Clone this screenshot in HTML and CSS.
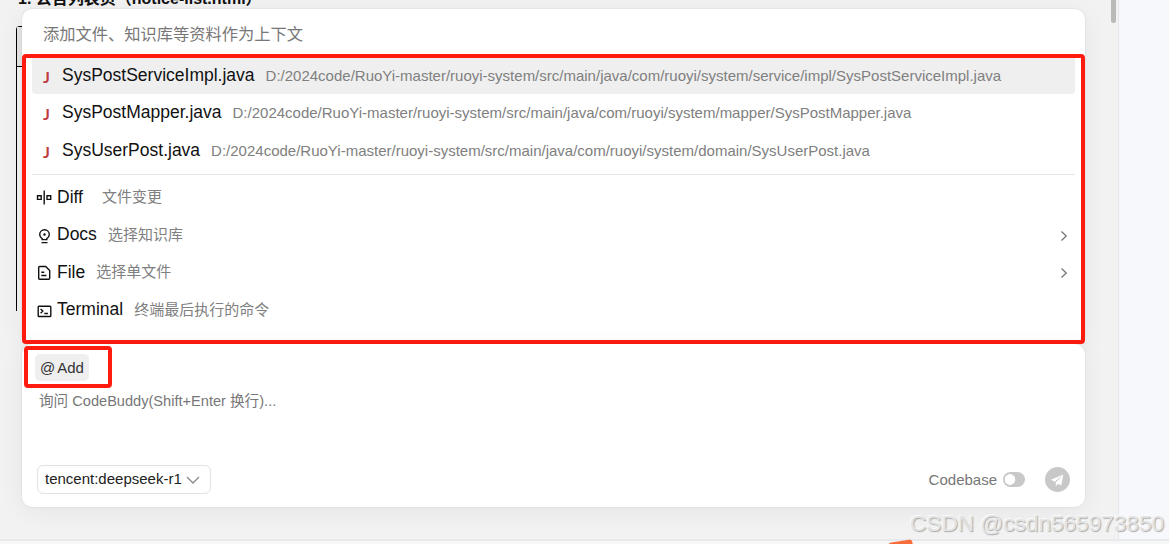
FILE: index.html
```html
<!DOCTYPE html>
<html lang="zh-CN">
  <head>
    <meta charset="utf-8">
    <meta name="viewport" content="width=device-width, initial-scale=1">
    <title>CodeBuddy</title>
    <link rel="stylesheet" href="styles.css">
  </head>
<body>
  <div class="layout">
    <div class="chat">
      <!-- answer behind the popup -->
      <div class="answer-title">1. 公告列表页（notice-list.html）</div>
      <div class="answer-code"><div class="code-head"></div></div>
      <div class="scroll-thumb"></div>

      <div class="menu">
        <div class="menu-search">添加文件、知识库等资料作为上下文</div>
        <div class="menu-list">
          <div class="file active"><span class="java">J</span><span class="name">SysPostServiceImpl.java</span><span class="path">D:/2024code/RuoYi-master/ruoyi-system/src/main/java/com/ruoyi/system/service/impl/SysPostServiceImpl.java</span></div>
          <div class="file"><span class="java">J</span><span class="name">SysPostMapper.java</span><span class="path">D:/2024code/RuoYi-master/ruoyi-system/src/main/java/com/ruoyi/system/mapper/SysPostMapper.java</span></div>
          <div class="file"><span class="java">J</span><span class="name">SysUserPost.java</span><span class="path">D:/2024code/RuoYi-master/ruoyi-system/src/main/java/com/ruoyi/system/domain/SysUserPost.java</span></div>
          <div class="divider"></div>
          <div class="option">
            <svg class="icon" viewBox="0 0 16 16"><path d="M1.500 5.700h3.700v3.700H1.500zM11 5.700h3.700v3.700H11zM8.200.5v14"/></svg>
            <span class="name">Diff</span><span class="desc wide">文件变更</span>
          </div>
          <div class="option">
            <svg class="icon" viewBox="0 0 16 16"><path d="M6.200 11.600v-1C4.700 9.800 3.700 8.500 3.700 6.600a4.800 4.800 0 0 1 9.600 0c0 1.900-1 3.200-2.500 4v1zM5.500 14.600h6"/><circle class="dot" cx="8.500" cy="6.500" r="1.200"/></svg>
            <span class="name">Docs</span><span class="desc">选择知识库</span>
            <svg class="arrow" viewBox="0 0 8 12"><path d="M1.500 1.500L6.200 6l-4.700 4.500"/></svg>
          </div>
          <div class="option">
            <svg class="icon" viewBox="0 0 16 16"><path d="M3.700 1.500h6l4 4v7.700q0 1-1 1h-9q-1 0-1-1V2.500q0-1 1-1zM5.300 7.200h3M5.300 10.500h5.200"/></svg>
            <span class="name">File</span><span class="desc">选择单文件</span>
            <svg class="arrow" viewBox="0 0 8 12"><path d="M1.500 1.500L6.200 6l-4.700 4.500"/></svg>
          </div>
          <div class="option">
            <svg class="icon" viewBox="0 0 16 16"><path d="M3 3.200h11q.8 0 .8.800v8.700q0 .8-.8.800H3q-.8 0-.8-.8V4q0-.8.800-.8zM4.600 6l2.200 2.100-2.200 2.100M8.300 10.500h3.600"/></svg>
            <span class="name">Terminal</span><span class="desc">终端最后执行的命令</span>
          </div>
        </div>
      </div>

      <div class="composer">
        <div class="add-box"><button class="add">@ Add</button></div>
        <div class="prompt">询问 CodeBuddy(Shift+Enter 换行)...</div>
        <div class="toolbar">
          <button class="model">tencent:deepseek-r1
            <svg viewBox="0 0 14 8"><path d="M1 1l6 6 6-6"/></svg>
          </button>
          <span class="codebase">Codebase</span>
          <span class="switch"></span>
          <button class="send"><svg viewBox="0 0 25 25"><path d="M18.300 7.500L6 12.800l3.700 1.900zM18.300 7.500l-7.500 8v3.700l2.200-2.500 3.200 1.700z"/></svg></button>
        </div>
      </div>
    </div>
    <div class="side"></div>
    <div class="statusbar"></div>
  </div>
  <div class="orange-tab"></div>
  <div class="watermark">CSDN @csdn565973850</div>
</body>
</html>
```
FILE: styles.css
```css
body, html {margin: 0; padding: 0; overflow: hidden;}

body {
  position: relative;
  height: 544px;
  font-family: "Liberation Sans", "Noto Sans CJK SC", sans-serif;
  font-size: 15px;
  color: #111;
}

button {
  font: inherit;
  border: 0;
  padding: 0;
}

svg {
  fill: none;
  stroke: #111;
}

.layout {
  display: grid;
  grid-template-columns: 1118px 1fr;
  grid-template-rows: 539px 5px;
  height: 544px;
}

.chat {
  position: relative;
  box-sizing: border-box;
  padding: 9px 33px 0 22px;
  background: #f2f2f2;
}

.side {
  background: #f6f8fb;
  border-left: 1px solid #e5e7eb;
}

.statusbar {
  grid-column: 1 / 3;
  box-sizing: border-box;
  border-top: 2px solid #e8e9ed;
  background: #f7f7f8;
}

.answer-title {
  position: absolute;
  left: 18px;
  top: -12px;
  line-height: 22px;
  font-size: 16px;
  font-weight: bold;
  white-space: nowrap;
}

.answer-code {
  position: absolute;
  left: 16px;
  top: 26px;
  width: 30px;
  height: 284px;
  border-left: 1px solid #000;
  border-top: 1px solid #000;
  border-top-left-radius: 4px;
}

.code-head {
  height: 39px;
  border-bottom: 1px solid #000;
  background: #e5e5e5;
}

.scroll-thumb {
  position: absolute;
  left: 1111px;
  top: 0;
  width: 5px;
  height: 23px;
  border-radius: 0 0 3px 3px;
  background: #bababa;
}

.menu, .composer {
  position: relative;
  background: #fff;
  border-radius: 10px;
  box-shadow: 0 0 2px rgba(0, 0, 0, .12), 0 4px 26px rgba(0, 0, 0, .06);
}

.menu {
  height: 335px;
}

.menu-search {
  height: 45px;
  padding-left: 21px;
  line-height: 50px;
  font-size: 16.25px;
  color: #777;
}

.menu-list {
  box-sizing: border-box;
  height: 290px;
  padding: 0 6px;
  border: 4px solid #ff1b10;
  border-radius: 4px;
}

.file, .option {
  display: flex;
  align-items: center;
  height: 37.5px;
}

.file.active {
  box-sizing: border-box;
  height: 36px;
  padding-bottom: 2px;
  background: #efefef;
  border-radius: 0 0 4px 4px;
}

.java {
  width: 19px;
  padding: 3px 0 0 11px;
  font-family: Lato, sans-serif;
  font-size: 16px;
  line-height: 18px;
  font-weight: bold;
  color: #c13d43;
}

.name {
  font-size: 17.5px;
}

.path, .desc {
  margin-left: 11px;
  color: #808080;
}

.desc {
  line-height: 20px;
}

.desc.wide {
  margin-left: 19px;
}

.divider {
  height: 1px;
  margin: 5px 0 3.5px;
  background: #e8e8e8;
}

.icon {
  width: 16px;
  height: 16px;
  margin: 2px 5px 0 4px;
  stroke-width: 1.4;
}

.icon .dot {
  fill: #111;
  stroke: none;
}

.arrow {
  width: 8px;
  height: 12px;
  margin: 2px 7px 0 auto;
  stroke: #777;
  stroke-width: 1.3;
}

.composer {
  display: flex;
  flex-direction: column;
  box-sizing: border-box;
  height: 163px;
  padding: 2px 15px 13px 2px;
}

.add-box {
  box-sizing: border-box;
  width: 88px;
  height: 42px;
  padding: 4px 7px;
  border: 4px solid #ff1b10;
  border-radius: 4px;
}

.add {
  display: block;
  width: 54px;
  height: 27px;
  border-radius: 5px;
  background: #efefef;
  color: #333;
  word-spacing: -1.5px;
}

.prompt {
  padding: 2px 0 0 15px;
  line-height: 22px;
  font-size: 14.6px;
  color: #777;
}

.toolbar {
  display: flex;
  align-items: center;
  margin-top: auto;
  padding-left: 13px;
}

.model {
  display: flex;
  align-items: center;
  box-sizing: border-box;
  width: 174px;
  height: 29px;
  padding: 0 0 2px 7px;
  border: 1px solid #e2e2e2;
  border-radius: 6px;
  background: #fff;
  color: #222;
}

.model svg {
  width: 14px;
  height: 8px;
  margin: 3px 0 0 4px;
  stroke: #888;
  stroke-width: 1.3;
}

.codebase {
  margin-left: auto;
  color: #777;
}

.switch {
  width: 22px;
  height: 15px;
  margin: 0 20px 0 6px;
  border-radius: 8px;
  background: radial-gradient(circle at 7px 7.5px, #fff 5px, #c8c8c8 5.6px);
}

.send {
  width: 25px;
  height: 25px;
  border-radius: 50%;
  background: #c8c8c8;
}

.send svg {
  display: block;
  fill: #fff;
  stroke: none;
}

.orange-tab {
  position: absolute;
  left: 889px;
  top: 541px;
  width: 24px;
  height: 12px;
  border-radius: 3px;
  background: #f96d3c;
  transform: rotate(-9deg);
}

.watermark {
  position: absolute;
  left: 910px;
  top: 511px;
  line-height: 26px;
  font-size: 22.6px;
  color: #e4e4e4;
  text-shadow: 1px 1px 1px #aaa, -1px -1px 0 #fafafa;
  white-space: nowrap;
}
```
